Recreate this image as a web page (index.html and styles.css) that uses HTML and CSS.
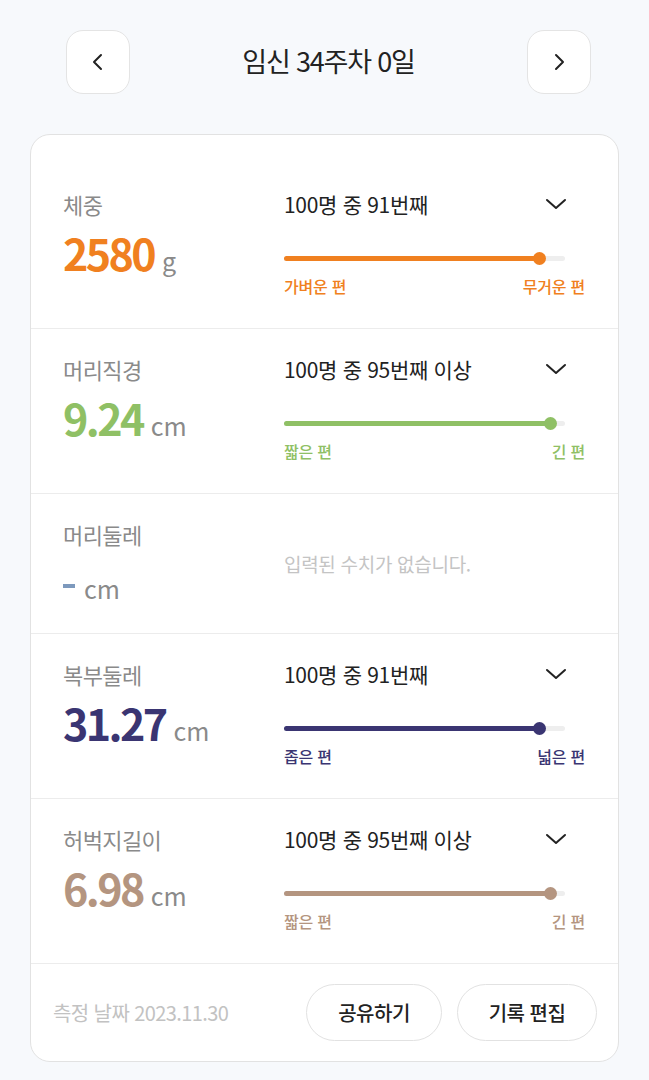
FILE: index.html
```html
<!DOCTYPE html>
<html lang="ko">
<head>
<meta charset="utf-8">
<link rel="stylesheet" href="styles.css">
</head>
<body>
<header class="top">
  <button class="nav-btn" aria-label="이전">
    <svg width="16" height="20" viewBox="0 0 16 20"><path d="M11 3 L4 10 L11 17" fill="none" stroke="#222" stroke-width="2" stroke-linecap="round" stroke-linejoin="round"/></svg>
  </button>
  <h1 class="title">임신 34주차 0일</h1>
  <button class="nav-btn" aria-label="다음">
    <svg width="16" height="20" viewBox="0 0 16 20"><path d="M5 3 L12 10 L5 17" fill="none" stroke="#222" stroke-width="2" stroke-linecap="round" stroke-linejoin="round"/></svg>
  </button>
</header>

<main class="card">
  <section class="row">
    <div class="left">
      <div class="label">체중</div>
      <div class="value orange">2580<span class="unit">g</span></div>
    </div>
    <div class="right">
      <div class="rank"><span>100명 중 91번째</span>
        <svg class="chev" width="22" height="14" viewBox="0 0 22 14"><path d="M2 3 L11 11 L20 3" fill="none" stroke="#222" stroke-width="2" stroke-linecap="round" stroke-linejoin="round"/></svg>
      </div>
      <div class="slider"><div class="fill bg-orange" style="width:91%"><span class="thumb bg-orange"></span></div></div>
      <div class="ends orange"><span>가벼운 편</span><span>무거운 편</span></div>
    </div>
  </section>

  <section class="row">
    <div class="left">
      <div class="label">머리직경</div>
      <div class="value green">9.24<span class="unit">cm</span></div>
    </div>
    <div class="right">
      <div class="rank"><span>100명 중 95번째 이상</span>
        <svg class="chev" width="22" height="14" viewBox="0 0 22 14"><path d="M2 3 L11 11 L20 3" fill="none" stroke="#222" stroke-width="2" stroke-linecap="round" stroke-linejoin="round"/></svg>
      </div>
      <div class="slider"><div class="fill bg-green" style="width:95%"><span class="thumb bg-green"></span></div></div>
      <div class="ends green"><span>짧은 편</span><span>긴 편</span></div>
    </div>
  </section>

  <section class="row empty">
    <div class="left">
      <div class="label">머리둘레</div>
      <div class="value"><span class="dash"></span><span class="unit">cm</span></div>
    </div>
    <div class="right">
      <div class="no-data">입력된 수치가 없습니다.</div>
    </div>
  </section>

  <section class="row">
    <div class="left">
      <div class="label">복부둘레</div>
      <div class="value navy">31.27<span class="unit">cm</span></div>
    </div>
    <div class="right">
      <div class="rank"><span>100명 중 91번째</span>
        <svg class="chev" width="22" height="14" viewBox="0 0 22 14"><path d="M2 3 L11 11 L20 3" fill="none" stroke="#222" stroke-width="2" stroke-linecap="round" stroke-linejoin="round"/></svg>
      </div>
      <div class="slider"><div class="fill bg-navy" style="width:91%"><span class="thumb bg-navy"></span></div></div>
      <div class="ends navy"><span>좁은 편</span><span>넓은 편</span></div>
    </div>
  </section>

  <section class="row">
    <div class="left">
      <div class="label">허벅지길이</div>
      <div class="value brown">6.98<span class="unit">cm</span></div>
    </div>
    <div class="right">
      <div class="rank"><span>100명 중 95번째 이상</span>
        <svg class="chev" width="22" height="14" viewBox="0 0 22 14"><path d="M2 3 L11 11 L20 3" fill="none" stroke="#222" stroke-width="2" stroke-linecap="round" stroke-linejoin="round"/></svg>
      </div>
      <div class="slider"><div class="fill bg-brown" style="width:95%"><span class="thumb bg-brown"></span></div></div>
      <div class="ends brown"><span>짧은 편</span><span>긴 편</span></div>
    </div>
  </section>

  <footer class="foot">
    <div class="date">측정 날짜 2023.11.30</div>
    <div class="actions">
      <button class="pill">공유하기</button>
      <button class="pill wide">기록 편집</button>
    </div>
  </footer>
</main>
</body>
</html>
```

FILE: styles.css
```css
* { box-sizing: border-box; }
html, body { margin: 0; padding: 0; }
body {
  background: #f7f9fc;
  font-family: "Noto Sans CJK KR", "Noto Sans", sans-serif;
  color: #222;
  width: 649px;
}
button { font-family: inherit; }

.top {
  display: flex;
  align-items: center;
  justify-content: space-between;
  padding: 30px 58px 0 66px;
  height: 94px;
}
.nav-btn {
  width: 64px;
  height: 64px;
  border-radius: 17px;
  border: 1px solid #e4e4e4;
  background: #fff;
  display: flex;
  align-items: center;
  justify-content: center;
  padding: 0;
}
.title {
  margin: 0 0 4px 0;
  font-size: 27px;
  font-weight: 400;
  letter-spacing: -1.2px;
  color: #222;
}

.card {
  margin: 40px 30px 0 30px;
  background: #fff;
  border: 1px solid #e2e2e2;
  border-radius: 20px;
  padding-top: 29px;
}

.row {
  display: grid;
  grid-template-columns: 221px 1fr;
  padding: 25px 33px 30px 32px;
  border-bottom: 1px solid #ececec;
}
.label {
  font-size: 22px;
  line-height: 30px;
  color: #8a8a8a;
  letter-spacing: -0.6px;
}
.value {
  margin-top: 9px;
  height: 48px;
  line-height: 48px;
  font-size: 43px;
  font-weight: 700;
  letter-spacing: -2.6px;
  display: flex;
  align-items: baseline;
}
.unit {
  font-size: 25px;
  font-weight: 400;
  color: #8a8a8a;
  margin-left: 8px;
  letter-spacing: 0;
}
.orange { color: #f08020; }
.green { color: #8fc065; }
.navy { color: #3a3572; }
.brown { color: #b49580; }
.bg-orange { background: #f08020; }
.bg-green { background: #8fc065; }
.bg-navy { background: #3a3572; }
.bg-brown { background: #b49580; }

.right { display: flex; flex-direction: column; }
.rank {
  display: flex;
  align-items: center;
  justify-content: space-between;
  height: 30px;
  font-size: 21px;
  letter-spacing: -0.3px;
  color: #222;
  padding-right: 18px;
}
.slider {
  margin-top: 37px;
  margin-right: 20px;
  height: 5px;
  border-radius: 3px;
  background: #eeeeee;
}
.fill {
  position: relative;
  height: 5px;
  border-radius: 3px;
}
.thumb {
  position: absolute;
  right: -6px;
  top: -4px;
  width: 13px;
  height: 13px;
  border-radius: 50%;
}
.ends {
  margin-top: 13px;
  display: flex;
  justify-content: space-between;
  font-size: 16px;
  line-height: 24px;
  font-weight: 500;
  letter-spacing: -0.2px;
}

.row.empty { padding-bottom: 21px; }
.row.empty .value { margin-top: 15px; align-items: center; }
.dash {
  display: inline-block;
  width: 12px;
  height: 4px;
  background: #7d99bd;
  margin-top: -4px;
}
.row.empty .unit { align-self: center; margin-left: 9px; }
.no-data {
  margin-top: 30px;
  font-size: 19px;
  line-height: 30px;
  color: #c4c4c4;
  letter-spacing: -0.3px;
}

.foot {
  display: flex;
  align-items: center;
  justify-content: space-between;
  height: 97px;
  padding: 0 21px 0 22px;
}
.date {
  font-size: 20px;
  color: #c2c2c2;
  letter-spacing: -0.6px;
}
.actions { display: flex; gap: 15px; }
.pill {
  height: 57px;
  width: 136px;
  border-radius: 29px;
  border: 1px solid #e2e2e2;
  background: #fff;
  font-size: 20px;
  font-weight: 500;
  color: #222;
  letter-spacing: -0.5px;
}
.pill.wide { width: 140px; }
```
